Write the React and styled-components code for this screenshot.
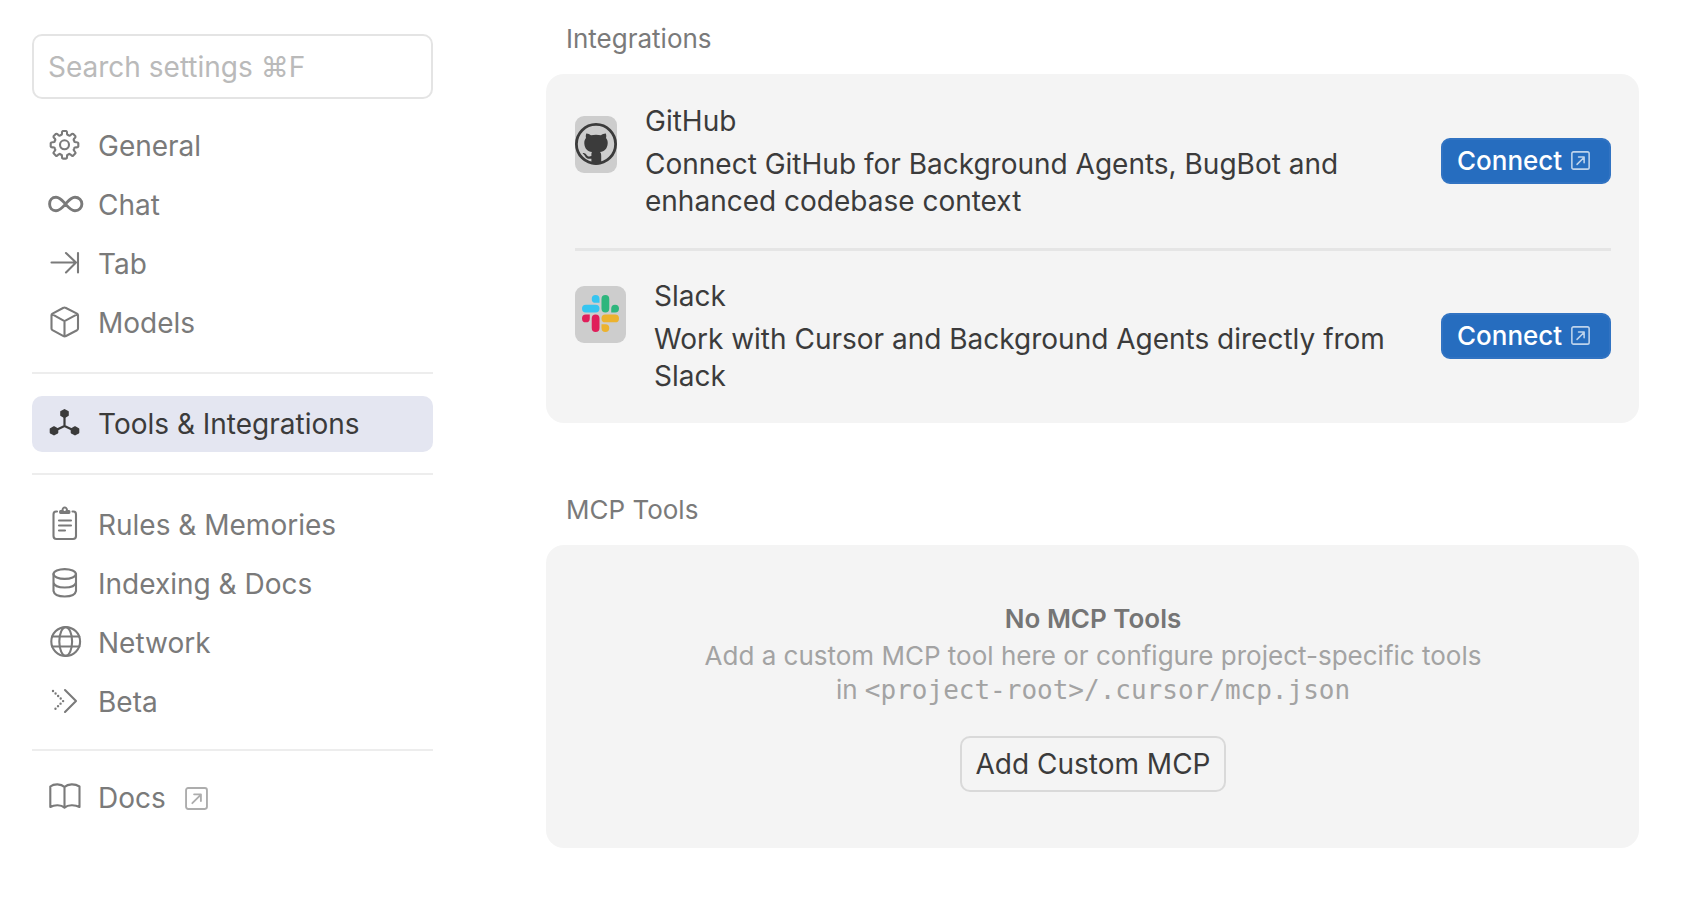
import React from "react";
import styled, { createGlobalStyle, css } from "styled-components";

const GlobalStyle = createGlobalStyle`
  * { box-sizing: border-box; }
  body {
    margin: 0;
    background: #fff;
    color: #3b3b3b;
    font-family: Inter, "Liberation Sans", sans-serif;
    font-size: 28px;
  }
  h2, h3, p { margin: 0; font-weight: 400; }
`;

const Page = styled.div`
  display: grid;
  grid-template-columns: 401px minmax(0, 1fr);
  column-gap: 113px;
  align-items: start;
  padding: 0 61px 0 32px;
`;

const Sidebar = styled.aside`
  padding-top: 34px;
`;

const SearchInput = styled.input`
  display: block;
  width: 100%;
  height: 65px;
  margin-bottom: 19px;
  padding: 0 14px;
  border: 2px solid #e4e4e4;
  border-radius: 10px;
  background: #fff;
  color: #3b3b3b;
  font: inherit;
  outline: none;
  &::placeholder { color: #bababa; opacity: 1; }
`;

const NavGroup = styled.div`
  display: flex;
  flex-direction: column;
  gap: 3px;
`;

const Divider = styled.hr`
  height: 2px;
  margin: ${(p) => (p.$tight ? "19px 0" : "21px 0 22px")};
  border: 0;
  background: #ededed;
`;

const NavItem = styled.a`
  display: flex;
  align-items: center;
  gap: 16px;
  height: 56px;
  padding: 0 16px;
  border-radius: 10px;
  color: #7a7a7a;
  text-decoration: none;
  white-space: nowrap;
  ${(p) =>
    p.$active &&
    css`
      background: #e4e6f1;
      color: #3b3b3b;
    `}
`;

const NavIcon = styled.span`
  display: flex;
  flex: none;
  width: 34px;
  height: 36px;
  svg { display: block; overflow: visible; }
`;

const External = styled.span`
  display: flex;
  margin-left: 3px;
  color: #adadad;
`;

const Main = styled.main`
  padding-top: 20px;
`;

const Section = styled.section`
  margin-bottom: 68px;
`;

const SectionTitle = styled.h2`
  padding: 0 20px;
  margin-bottom: 16px;
  color: #7a7a7a;
  font-size: 26px;
  line-height: 38px;
`;

const Card = styled.div`
  padding: 0 28px 0 29px;
  border-radius: 18px;
  background: #f4f4f4;
`;

const Integration = styled.article`
  display: flex;
  align-items: center;
  gap: 28px;
  padding: 28px 0;
  & + & {
    padding-top: 26px;
    border-top: 3px solid #e5e5e5;
  }
`;

const Logo = styled.span`
  display: flex;
  flex: none;
  align-self: flex-start;
  align-items: center;
  justify-content: center;
  width: ${(p) => p.$width}px;
  height: 57px;
  margin-top: ${(p) => p.$top}px;
  padding-bottom: 2px;
  border-radius: 9px;
  background: #cdcdcd;
`;

const Details = styled.div`
  flex: 1;
  min-width: 0;
`;

const Name = styled.h3`
  margin-bottom: 6px;
  font-size: 28px;
  line-height: 38px;
`;

const Description = styled.p`
  line-height: 37px;
`;

const ConnectButton = styled.button`
  display: flex;
  flex: none;
  align-items: center;
  gap: 9px;
  width: 170px;
  height: 46px;
  margin-left: 8px;
  padding: 0 14px 1px;
  border: 2px solid #3173c2;
  border-radius: 9px;
  background: #266dbf;
  color: #fff;
  font: 500 26px Inter, sans-serif;
  svg { opacity: 0.7; }
`;

const EmptyCard = styled(Card)`
  display: flex;
  flex-direction: column;
  align-items: center;
  padding-top: 54px;
  padding-bottom: 56px;
  text-align: center;
`;

const EmptyTitle = styled.h3`
  color: #757575;
  font-size: 26px;
  font-weight: 600;
  line-height: 40px;
`;

const EmptyText = styled.p`
  max-width: 800px;
  margin-bottom: 29px;
  color: #a3a3a3;
  font-size: 26px;
  line-height: 34px;
`;

const PathHint = styled.span`
  display: inline-block;
`;

const Code = styled.code`
  font-family: "DejaVu Sans Mono", monospace;
  font-size: 26px;
`;

const OutlineButton = styled.button`
  height: 56px;
  padding: 0 14px;
  border: 2px solid #d9d9d9;
  border-radius: 10px;
  background: transparent;
  color: #3b3b3b;
  font: 400 28px Inter, sans-serif;
`;

const Svg = ({ children, w = 34, h = 36 }) => (
  <svg width={w} height={h} viewBox={`0 0 ${w} ${h}`} fill="none" stroke="currentColor" strokeWidth="2.1" strokeLinecap="round" strokeLinejoin="round" aria-hidden="true">
    {children}
  </svg>
);

// Outline of an eight-toothed gear with rounded tooth tips and valleys.
const gearOutline = (cx, cy) => {
  const at = (deg, r) => {
    const a = (deg * Math.PI) / 180;
    return `${(cx + r * Math.sin(a)).toFixed(2)} ${(cy - r * Math.cos(a)).toFixed(2)}`;
  };
  let d = `M${at(-7, 13.9)}`;
  for (let a = 0; a < 360; a += 45) {
    d += `L${at(a + 7, 13.9)}Q${at(a + 11, 13.8)} ${at(a + 12, 12.2)}`;
    d += `Q${at(a + 14, 9.6)} ${at(a + 22.5, 10.6)}`;
    d += `Q${at(a + 31, 9.6)} ${at(a + 33, 12.2)}Q${at(a + 34, 13.8)} ${at(a + 38, 13.9)}`;
  }
  return `${d}Z`;
};

const GearIcon = () => (
  <Svg>
    <path d={gearOutline(16.5, 16.8)} />
    <circle cx="16.5" cy="16.8" r="4.5" />
  </Svg>
);
const InfinityIcon = () => (
  <Svg>
    <path strokeWidth="2.9" d="M17.5 17C14.5 13.5 12 10.3 8 10.3C4 10.3 1.6 13.4 1.6 17C1.6 20.6 4 23.7 8 23.7C12 23.7 14.5 20.5 17.5 17C20.5 13.5 23 10.3 27 10.3C31 10.3 33.9 13.4 33.9 17C33.9 20.6 31 23.7 27 23.7C23 23.7 20.5 20.5 17.5 17Z" />
  </Svg>
);
const TabIcon = () => (
  <Svg><path d="M3.5 16.5H28M18 7L28 16.5L18 26.5M30 7V26.5" /></Svg>
);
const CubeIcon = () => (
  <Svg><path d="M15.5 2.8Q16.5 2.2 17.5 2.8L29 8.6Q30 9.2 30 10.3V23.5Q30 24.6 29 25.2L17.5 31.2Q16.5 31.8 15.5 31.2L4.5 25.2Q3.5 24.6 3.5 23.5V10.3Q3.5 9.2 4.5 8.6ZM4 9.2L16.5 16.2L29.5 9.2M16.5 16.2V31.2" /></Svg>
);
const NodesIcon = () => (
  <Svg>
    <path strokeWidth="2.2" d="M16.5 7.5V20M16.5 20L6 25M16.5 20L27 25" />
    <g fill="currentColor" stroke="currentColor" strokeWidth="1.8">
      <path d="M16.5 4L19.9 5.9V9.3L16.5 11.2L13.1 9.3V5.9Z" />
      <path d="M6 21.1L9.4 23V26.6L6 28.5L2.6 26.6V23Z" />
      <path d="M27 21.1L30.4 23V26.6L27 28.5L23.6 26.6V23Z" />
    </g>
  </Svg>
);
const ClipboardIcon = () => (
  <Svg>
    <path d="M9 4.5H8Q5.5 4.5 5.5 7.5V29Q5.5 32 8.5 32H25Q28 32 28 29V7.5Q28 4.5 25.5 4.5H24.5M11 13.5H23M11 18.5H23M11 23.5H17" />
    <path fill="currentColor" stroke="none" d="M12.5 3H13.5Q14 -0.5 16.7 -0.5Q19.5 -0.5 20 3H21Q22.5 3 22.5 5Q22.5 7 21 7H12.5Q11 7 11 5Q11 3 12.5 3Z" />
    <circle cx="16.7" cy="2.8" r="1.2" fill="#fff" stroke="none" />
  </Svg>
);
const DatabaseIcon = () => (
  <Svg>
    <ellipse cx="16.7" cy="8" rx="11.2" ry="4.9" />
    <path d="M5.5 8V25Q6.5 30.5 16.7 30.5Q27 30.5 28 25V8M5.5 16.5Q6.5 21.5 16.7 21.5Q27 21.5 28 16.5" />
  </Svg>
);
const GlobeIcon = () => (
  <Svg>
    <circle cx="17.7" cy="16.5" r="14.4" />
    <ellipse cx="17.7" cy="16.5" rx="6.4" ry="14.4" />
    <path d="M4 11.5H31.4M4 21.5H31.4" />
  </Svg>
);
const BetaIcon = () => (
  <Svg>
    <path d="M17 6L28 17L17 28" />
    <path strokeDasharray="0 3.6" strokeWidth="2.4" d="M5 7L15.2 17L5 27.2" />
  </Svg>
);
const BookIcon = () => (
  <Svg>
    <path d="M16.5 7C13 3.6 6 3.6 2.3 6.5V27C6.5 24.5 13 24.5 16.5 27.6C20 24.5 27 24.5 31.5 27V6.5C27 3.6 20 3.6 16.5 7ZM16.5 7V27.6" />
  </Svg>
);
const ExternalIcon = ({ size = 19 }) => (
  <svg width={size} height={size} viewBox="0 0 22 22" fill="none" stroke="currentColor" strokeWidth="1.8" strokeLinecap="round" strokeLinejoin="round" aria-hidden="true">
    <rect x="1" y="1" width="20" height="20" rx="2" />
    <path d="M7 15.5L15 7.5M8.7 7H15.2V13.5" />
  </svg>
);

const GithubLogo = () => (
  <svg width="42" height="42" viewBox="0 0 42 42" aria-hidden="true">
    <circle cx="21" cy="21" r="19.6" fill="none" stroke="#3b3b3b" strokeWidth="2.8" />
    <path fill="#3b3b3b" d="M11.3 10.5C13 10.4 14.8 11.4 16 12.3C19 11.6 23 11.6 26 12.3C27.3 11.3 29.2 10.4 30.8 10.5C31.5 12.3 31.3 14 31 15C32.3 16.5 32.9 18.3 32.7 20.5C32.2 26 29.5 28.4 25 29C26 29.8 26.2 31 26.2 33V40.5C23 41.8 19 41.8 16.4 40.5V35.7C12.5 36.3 11 35 10 33C9.3 31.7 8.6 31 7.6 30.5C8.5 29.6 10.5 30.2 11.8 32.2C13 33.8 14.5 33.6 16.4 33.1C16.4 31 16.3 29.7 17 29C12.5 28.4 9.8 26 9.3 20.5C9.1 18 10 16.4 11 15C10.7 13.8 10.7 12 11.3 10.5Z" />
  </svg>
);

const SlackLogo = () => (
  <svg width="37" height="37" viewBox="0 0 24 24" aria-hidden="true">
    <path fill="#e01e5a" d="M5.042 15.165a2.528 2.528 0 0 1-2.52 2.523A2.528 2.528 0 0 1 0 15.165a2.527 2.527 0 0 1 2.522-2.52h2.52v2.52zM6.313 15.165a2.527 2.527 0 0 1 2.521-2.52 2.527 2.527 0 0 1 2.521 2.52v6.313A2.528 2.528 0 0 1 8.834 24a2.528 2.528 0 0 1-2.521-2.522v-6.313z" />
    <path fill="#36c5f0" d="M8.834 5.042a2.528 2.528 0 0 1-2.521-2.52A2.528 2.528 0 0 1 8.834 0a2.528 2.528 0 0 1 2.521 2.522v2.52H8.834zM8.834 6.313a2.528 2.528 0 0 1 2.521 2.521 2.528 2.528 0 0 1-2.521 2.521H2.522A2.528 2.528 0 0 1 0 8.834a2.528 2.528 0 0 1 2.522-2.521h6.312z" />
    <path fill="#2eb67d" d="M18.956 8.834a2.528 2.528 0 0 1 2.522-2.521A2.528 2.528 0 0 1 24 8.834a2.528 2.528 0 0 1-2.522 2.521h-2.522V8.834zM17.688 8.834a2.528 2.528 0 0 1-2.523 2.521 2.527 2.527 0 0 1-2.52-2.521V2.522A2.527 2.527 0 0 1 15.165 0a2.528 2.528 0 0 1 2.523 2.522v6.312z" />
    <path fill="#ecb22e" d="M15.165 18.956a2.528 2.528 0 0 1 2.523 2.522A2.528 2.528 0 0 1 15.165 24a2.527 2.527 0 0 1-2.52-2.522v-2.522h2.52zM15.165 17.688a2.527 2.527 0 0 1-2.52-2.523 2.526 2.526 0 0 1 2.52-2.52h6.313A2.527 2.527 0 0 1 24 15.165a2.528 2.528 0 0 1-2.522 2.523h-6.313z" />
  </svg>
);

const navGroups = [
  [
    { label: "General", icon: GearIcon },
    { label: "Chat", icon: InfinityIcon },
    { label: "Tab", icon: TabIcon },
    { label: "Models", icon: CubeIcon },
  ],
  [{ label: "Tools & Integrations", icon: NodesIcon, active: true }],
  [
    { label: "Rules & Memories", icon: ClipboardIcon },
    { label: "Indexing & Docs", icon: DatabaseIcon },
    { label: "Network", icon: GlobeIcon },
    { label: "Beta", icon: BetaIcon },
  ],
  [{ label: "Docs", icon: BookIcon, external: true }],
];

const integrations = [
  {
    name: "GitHub",
    text: "Connect GitHub for Background Agents, BugBot and enhanced codebase context",
    logo: GithubLogo,
    logoWidth: 42,
    logoTop: 14,
  },
  {
    name: "Slack",
    text: "Work with Cursor and Background Agents directly from Slack",
    logo: SlackLogo,
    logoWidth: 51,
    logoTop: 9,
  },
];

export default function App() {
  return (
    <>
      <GlobalStyle />
      <Page>
        <Sidebar>
          <SearchInput type="text" aria-label="Search settings" placeholder="Search settings ⌘F" />
          <nav>
            {navGroups.map((group, i) => (
              <React.Fragment key={i}>
                {i > 0 && <Divider $tight={i === navGroups.length - 1} />}
                <NavGroup>
                  {group.map(({ label, icon: Icon, active, external }) => (
                    <NavItem key={label} href="#" $active={active} aria-current={active ? "page" : undefined}>
                      <NavIcon><Icon /></NavIcon>
                      {label}
                      {external && <External><ExternalIcon size={23} /></External>}
                    </NavItem>
                  ))}
                </NavGroup>
              </React.Fragment>
            ))}
          </nav>
        </Sidebar>
        <Main>
          <Section>
            <SectionTitle>Integrations</SectionTitle>
            <Card>
              {integrations.map(({ name, text, logo: Mark, logoWidth, logoTop }) => (
                <Integration key={name}>
                  <Logo $width={logoWidth} $top={logoTop}><Mark /></Logo>
                  <Details>
                    <Name>{name}</Name>
                    <Description>{text}</Description>
                  </Details>
                  <ConnectButton type="button">
                    Connect
                    <ExternalIcon />
                  </ConnectButton>
                </Integration>
              ))}
            </Card>
          </Section>
          <Section>
            <SectionTitle>MCP Tools</SectionTitle>
            <EmptyCard>
              <EmptyTitle>No MCP Tools</EmptyTitle>
              <EmptyText>
                Add a custom MCP tool here or configure project-specific tools{" "}
                <PathHint>in <Code>&lt;project-root&gt;/.cursor/mcp.json</Code></PathHint>
              </EmptyText>
              <OutlineButton type="button">Add Custom MCP</OutlineButton>
            </EmptyCard>
          </Section>
        </Main>
      </Page>
    </>
  );
}
